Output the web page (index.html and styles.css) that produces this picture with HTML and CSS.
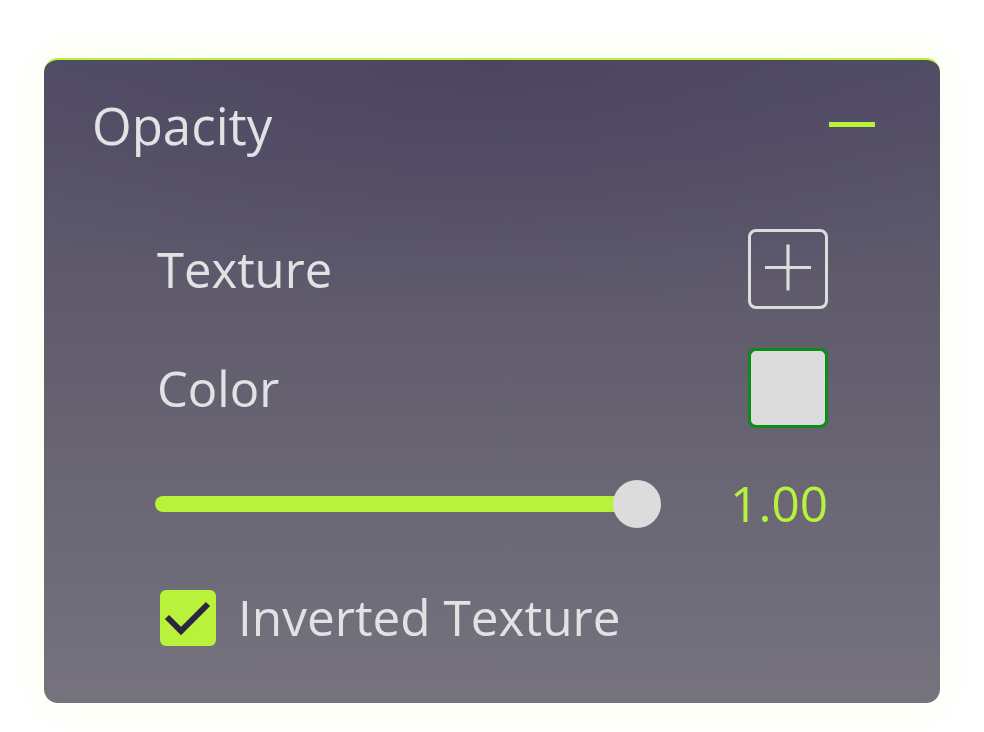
FILE: index.html
```html
<!DOCTYPE html>
<html>
<head>
<meta charset="utf-8">
<link rel="stylesheet" href="styles.css">
</head>
<body>
<div class="panel">
  <div class="header">
    <span class="title">Opacity</span>
    <span class="minus"></span>
  </div>
  <div class="content">
    <div class="row row-texture">
      <span class="label">Texture</span>
      <div class="add-box">
        <svg width="80" height="80" viewBox="0 0 80 80"><path d="M17 38.5H63M40 15.5V61.5" stroke="#dcdcdc" stroke-width="3.2" fill="none"/></svg>
      </div>
    </div>
    <div class="row row-color">
      <span class="label">Color</span>
      <div class="color-box"></div>
    </div>
    <div class="row row-slider">
      <div class="slider">
        <div class="track"></div>
        <div class="thumb"></div>
      </div>
      <span class="value">1.00</span>
    </div>
    <div class="row row-check">
      <div class="checkbox">
        <svg width="56" height="56" viewBox="0 0 56 56"><path d="M7 27L21 41L48 14" stroke="#2a2540" stroke-width="6" fill="none"/></svg>
      </div>
      <span class="check-label">Inverted Texture</span>
    </div>
  </div>
</div>
</body>
</html>
```
FILE: styles.css
```css
html, body {
  margin: 0;
  padding: 0;
  background: #ffffff;
}
body {
  width: 984px;
  height: 732px;
  overflow: hidden;
  font-family: "Open Sans", "Noto Sans", sans-serif;
}
.panel {
  margin: 58px 0 0 44px;
  width: 896px;
  height: 645px;
  box-sizing: border-box;
  border-radius: 14px;
  border-top: 2px solid #b8f23a;
  background:
    radial-gradient(ellipse 70% 40% at 50% 0%, rgba(70, 62, 92, 0.55), rgba(70, 62, 92, 0) 100%),
    linear-gradient(to bottom, #534e66 0%, #64606f 50%, #76737f 100%);
  box-shadow: 0 0 36px rgba(200, 250, 80, 0.13);
  display: flex;
  flex-direction: column;
}
.header {
  height: 134px;
  display: flex;
  align-items: center;
  justify-content: space-between;
  padding: 0 65px 0 48px;
}
.title {
  font-size: 51px;
  color: #e2e2e4;
  line-height: 1;
  margin-top: -4px;
}
.minus {
  width: 46px;
  height: 5px;
  background: #b8f23a;
  margin-top: -5px;
}
.content {
  padding: 0 112px 0 113px;
  display: flex;
  flex-direction: column;
}
.row {
  display: flex;
  align-items: center;
  justify-content: space-between;
}
.row-texture {
  margin-top: 35px;
  height: 80px;
}
.row-color {
  margin-top: 39px;
  height: 80px;
}
.row-slider {
  margin-top: 52px;
  height: 48px;
}
.row-check {
  margin-top: 62px;
  height: 56px;
  justify-content: flex-start;
}
.label {
  font-size: 49px;
  color: #e2e2e4;
  line-height: 1;
}
.add-box {
  width: 80px;
  height: 80px;
  box-sizing: border-box;
  border: 3px solid #dcdcdc;
  border-radius: 8px;
  position: relative;
}
.add-box svg {
  position: absolute;
  left: -3px;
  top: -3px;
}
.color-box {
  width: 80px;
  height: 80px;
  box-sizing: border-box;
  border: 3.5px solid #0d8c1c;
  border-radius: 8px;
  background: #dcdcdc;
}
.slider {
  position: relative;
  width: 506px;
  height: 48px;
  margin-left: -2px;
}
.track {
  position: absolute;
  left: 0;
  right: 24px;
  top: 16px;
  height: 16px;
  border-radius: 8px;
  background: #b8f23a;
}
.thumb {
  position: absolute;
  right: 0;
  top: 0;
  width: 48px;
  height: 48px;
  border-radius: 50%;
  background: #dcdcdc;
}
.value {
  font-size: 49.5px;
  color: #b8f23a;
  line-height: 1;
}
.checkbox {
  width: 56px;
  height: 56px;
  border-radius: 6px;
  background: #b8f23a;
  margin-left: 3px;
}
.checkbox svg {
  display: block;
}
.check-label {
  margin-left: 22px;
  font-size: 49.5px;
  color: #e2e2e4;
  line-height: 1;
}
```
